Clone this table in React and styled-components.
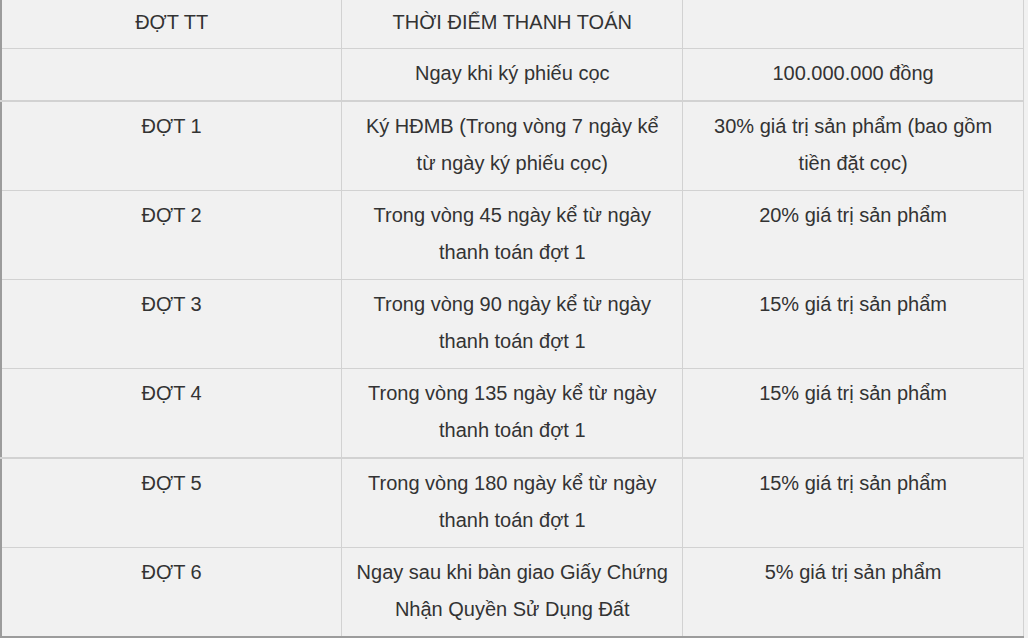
import React from 'react';
import styled, { createGlobalStyle } from 'styled-components';

const GlobalStyle = createGlobalStyle`
    html, body {
        margin: 0;
        padding: 0;
        background: #f1f1f1;
    }
    body {
        font-family: "Liberation Sans", Arial, sans-serif;
    }
`

const Table = styled.table`
    width: 1024px;
    border-collapse: collapse;
    table-layout: fixed;
    border-left: 2px solid #9c9c9c;
    border-bottom: 2px solid #9c9c9c;
    color: #333;
    font-size: 20px;
    line-height: 37px;
`

const Row = styled.tr`
    border-top: ${p => (p.$thick ? '2px' : '1px')} solid #d2d2d2;
`

const Cell = styled.td`
    border-right: 1px solid #d2d2d2;
    text-align: center;
    vertical-align: top;
    white-space: pre-line;
    padding: ${p => (p.$head ? '4px 8px 7px' : '6px 8px 8px')};
`

const rows = [
    { dot: '', time: 'Ngay khi ký phiếu cọc', value: '100.000.000 đồng' },
    { dot: 'ĐỢT 1', time: 'Ký HĐMB (Trong vòng 7 ngày kể\ntừ ngày ký phiếu cọc)', value: '30% giá trị sản phẩm (bao gồm\ntiền đặt cọc)', thick: true },
    { dot: 'ĐỢT 2', time: 'Trong vòng 45 ngày kể từ ngày\nthanh toán đợt 1', value: '20% giá trị sản phẩm' },
    { dot: 'ĐỢT 3', time: 'Trong vòng 90 ngày kể từ ngày\nthanh toán đợt 1', value: '15% giá trị sản phẩm' },
    { dot: 'ĐỢT 4', time: 'Trong vòng 135 ngày kể từ ngày\nthanh toán đợt 1', value: '15% giá trị sản phẩm' },
    { dot: 'ĐỢT 5', time: 'Trong vòng 180 ngày kể từ ngày\nthanh toán đợt 1', value: '15% giá trị sản phẩm', thick: true },
    { dot: 'ĐỢT 6', time: 'Ngay sau khi bàn giao Giấy Chứng\nNhận Quyền Sử Dụng Đất', value: '5% giá trị sản phẩm' },
]

const App = () => {
    return (
        <>
            <GlobalStyle />
            <Table>
                <tbody>
                    <tr>
                        <Cell $head>ĐỢT TT</Cell>
                        <Cell $head>THỜI ĐIỂM THANH TOÁN</Cell>
                        <Cell $head></Cell>
                    </tr>
                    {rows.map((r, i) => (
                        <Row key={i} $thick={r.thick}>
                            <Cell>{r.dot}</Cell>
                            <Cell>{r.time}</Cell>
                            <Cell>{r.value}</Cell>
                        </Row>
                    ))}
                </tbody>
            </Table>
        </>
    )
}

export default App;
